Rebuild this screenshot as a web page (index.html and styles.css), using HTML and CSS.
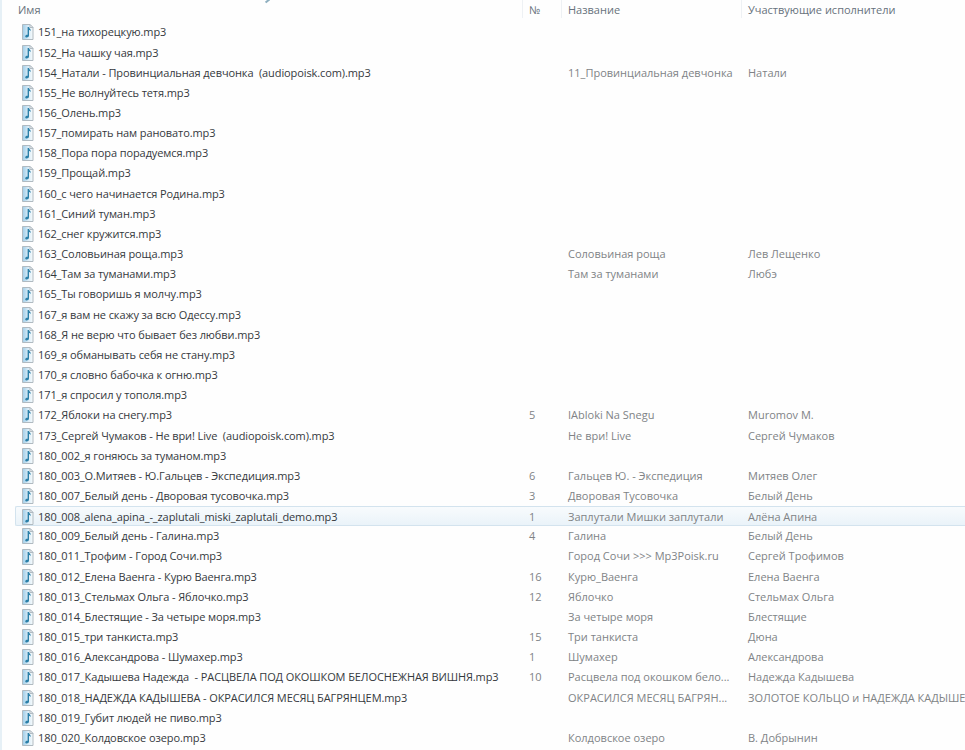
FILE: index.html
```html
<!DOCTYPE html>
<html lang="ru">
<head>
<meta charset="utf-8">
<title>Музыка</title>
<link rel="stylesheet" href="styles.css">
</head>
<body>
<svg class="defs" width="0" height="0" aria-hidden="true">
<defs>
<linearGradient id="pg" x1="0" y1="0" x2="1" y2="0"><stop offset="0" stop-color="#9fcde8"/><stop offset=".5" stop-color="#d6eaf6"/><stop offset="1" stop-color="#f7fbfd"/></linearGradient>
<symbol id="mp3" viewBox="0 0 14 16">
<path d="M1.5 .5H9L12 3.5V15.5H1.5Z" fill="url(#pg)" stroke="#b0bac1"/>
<path d="M9 .5V3.5H12Z" fill="#f6f9fb" stroke="#b0bac1"/>
<path d="M6.6 3H8C8.2 4.6 9.8 5 10 7 9.4 6.4 8.8 6.1 8 6V11.6C8 12.8 6.9 13.6 5.8 13.6 4.8 13.6 4.2 13 4.2 12.3 4.2 11.2 5.4 10.5 6.6 10.7Z" fill="#2a7fa8"/>
</symbol>
</defs>
</svg>
<span class="tick"></span>
<main class="list">
<header class="row head">
<div class="cell name">Имя</div>
<div class="cell num">№</div>
<div class="cell title">Название</div>
<div class="cell artist">Участвующие исполнители</div>
</header>
<div class="row"><div class="cell name"><svg class="ico"><use href="#mp3"/></svg><span>151_на тихорецкую.mp3</span></div></div>
<div class="row"><div class="cell name"><svg class="ico"><use href="#mp3"/></svg><span>152_На чашку чая.mp3</span></div></div>
<div class="row"><div class="cell name"><svg class="ico"><use href="#mp3"/></svg><span>154_Натали - Провинциальная девчонка  (audiopoisk.com).mp3</span></div><div class="cell num"></div><div class="cell title">11_Провинциальная девчонка</div><div class="cell artist">Натали</div></div>
<div class="row"><div class="cell name"><svg class="ico"><use href="#mp3"/></svg><span>155_Не волнуйтесь тетя.mp3</span></div></div>
<div class="row"><div class="cell name"><svg class="ico"><use href="#mp3"/></svg><span>156_Олень.mp3</span></div></div>
<div class="row"><div class="cell name"><svg class="ico"><use href="#mp3"/></svg><span>157_помирать нам рановато.mp3</span></div></div>
<div class="row"><div class="cell name"><svg class="ico"><use href="#mp3"/></svg><span>158_Пора пора порадуемся.mp3</span></div></div>
<div class="row"><div class="cell name"><svg class="ico"><use href="#mp3"/></svg><span>159_Прощай.mp3</span></div></div>
<div class="row"><div class="cell name"><svg class="ico"><use href="#mp3"/></svg><span>160_с чего начинается Родина.mp3</span></div></div>
<div class="row"><div class="cell name"><svg class="ico"><use href="#mp3"/></svg><span>161_Синий туман.mp3</span></div></div>
<div class="row"><div class="cell name"><svg class="ico"><use href="#mp3"/></svg><span>162_снег кружится.mp3</span></div></div>
<div class="row"><div class="cell name"><svg class="ico"><use href="#mp3"/></svg><span>163_Соловьиная роща.mp3</span></div><div class="cell num"></div><div class="cell title">Соловьиная роща</div><div class="cell artist">Лев Лещенко</div></div>
<div class="row"><div class="cell name"><svg class="ico"><use href="#mp3"/></svg><span>164_Там за туманами.mp3</span></div><div class="cell num"></div><div class="cell title">Там за туманами</div><div class="cell artist">Любэ</div></div>
<div class="row"><div class="cell name"><svg class="ico"><use href="#mp3"/></svg><span>165_Ты говоришь я молчу.mp3</span></div></div>
<div class="row"><div class="cell name"><svg class="ico"><use href="#mp3"/></svg><span>167_я вам не скажу за всю Одессу.mp3</span></div></div>
<div class="row"><div class="cell name"><svg class="ico"><use href="#mp3"/></svg><span>168_Я не верю что бывает без любви.mp3</span></div></div>
<div class="row"><div class="cell name"><svg class="ico"><use href="#mp3"/></svg><span>169_я обманывать себя не стану.mp3</span></div></div>
<div class="row"><div class="cell name"><svg class="ico"><use href="#mp3"/></svg><span>170_я словно бабочка к огню.mp3</span></div></div>
<div class="row"><div class="cell name"><svg class="ico"><use href="#mp3"/></svg><span>171_я спросил у тополя.mp3</span></div></div>
<div class="row"><div class="cell name"><svg class="ico"><use href="#mp3"/></svg><span>172_Яблоки на снегу.mp3</span></div><div class="cell num">5</div><div class="cell title">IAbloki Na Snegu</div><div class="cell artist">Muromov M.</div></div>
<div class="row"><div class="cell name"><svg class="ico"><use href="#mp3"/></svg><span>173_Сергей Чумаков - Не ври! Live  (audiopoisk.com).mp3</span></div><div class="cell num"></div><div class="cell title">Не ври! Live</div><div class="cell artist">Сергей Чумаков</div></div>
<div class="row"><div class="cell name"><svg class="ico"><use href="#mp3"/></svg><span>180_002_я гоняюсь за туманом.mp3</span></div></div>
<div class="row"><div class="cell name"><svg class="ico"><use href="#mp3"/></svg><span>180_003_О.Митяев - Ю.Гальцев - Экспедиция.mp3</span></div><div class="cell num">6</div><div class="cell title">Гальцев Ю. - Экспедиция</div><div class="cell artist">Митяев Олег</div></div>
<div class="row"><div class="cell name"><svg class="ico"><use href="#mp3"/></svg><span>180_007_Белый день - Дворовая тусовочка.mp3</span></div><div class="cell num">3</div><div class="cell title">Дворовая Тусовочка</div><div class="cell artist">Белый День</div></div>
<div class="row hover"><div class="cell name"><svg class="ico"><use href="#mp3"/></svg><span>180_008_alena_apina_-_zaplutali_miski_zaplutali_demo.mp3</span></div><div class="cell num">1</div><div class="cell title">Заплутали Мишки заплутали</div><div class="cell artist">Алёна Апина</div></div>
<div class="row"><div class="cell name"><svg class="ico"><use href="#mp3"/></svg><span>180_009_Белый день - Галина.mp3</span></div><div class="cell num">4</div><div class="cell title">Галина</div><div class="cell artist">Белый День</div></div>
<div class="row"><div class="cell name"><svg class="ico"><use href="#mp3"/></svg><span>180_011_Трофим - Город Сочи.mp3</span></div><div class="cell num"></div><div class="cell title">Город Сочи &gt;&gt;&gt; Mp3Poisk.ru</div><div class="cell artist">Сергей Трофимов</div></div>
<div class="row"><div class="cell name"><svg class="ico"><use href="#mp3"/></svg><span>180_012_Елена Ваенга - Курю Ваенга.mp3</span></div><div class="cell num">16</div><div class="cell title">Курю_Ваенга</div><div class="cell artist">Елена Ваенга</div></div>
<div class="row"><div class="cell name"><svg class="ico"><use href="#mp3"/></svg><span>180_013_Стельмах Ольга - Яблочко.mp3</span></div><div class="cell num">12</div><div class="cell title">Яблочко</div><div class="cell artist">Стельмах Ольга</div></div>
<div class="row"><div class="cell name"><svg class="ico"><use href="#mp3"/></svg><span>180_014_Блестящие - За четыре моря.mp3</span></div><div class="cell num"></div><div class="cell title">За четыре моря</div><div class="cell artist">Блестящие</div></div>
<div class="row"><div class="cell name"><svg class="ico"><use href="#mp3"/></svg><span>180_015_три танкиста.mp3</span></div><div class="cell num">15</div><div class="cell title">Три танкиста</div><div class="cell artist">Дюна</div></div>
<div class="row"><div class="cell name"><svg class="ico"><use href="#mp3"/></svg><span>180_016_Александрова - Шумахер.mp3</span></div><div class="cell num">1</div><div class="cell title">Шумахер</div><div class="cell artist">Александрова</div></div>
<div class="row"><div class="cell name"><svg class="ico"><use href="#mp3"/></svg><span>180_017_Кадышева Надежда  - РАСЦВЕЛА ПОД ОКОШКОМ БЕЛОСНЕЖНАЯ ВИШНЯ.mp3</span></div><div class="cell num">10</div><div class="cell title">Расцвела под окошком бело...</div><div class="cell artist">Надежда Кадышева</div></div>
<div class="row"><div class="cell name"><svg class="ico"><use href="#mp3"/></svg><span>180_018_НАДЕЖДА КАДЫШЕВА - ОКРАСИЛСЯ МЕСЯЦ БАГРЯНЦЕМ.mp3</span></div><div class="cell num"></div><div class="cell title">ОКРАСИЛСЯ МЕСЯЦ БАГРЯН...</div><div class="cell artist">ЗОЛОТОЕ КОЛЬЦО и НАДЕЖДА КАДЫШЕВА</div></div>
<div class="row"><div class="cell name"><svg class="ico"><use href="#mp3"/></svg><span>180_019_Губит людей не пиво.mp3</span></div></div>
<div class="row"><div class="cell name"><svg class="ico"><use href="#mp3"/></svg><span>180_020_Колдовское озеро.mp3</span></div><div class="cell num"></div><div class="cell title">Колдовское озеро</div><div class="cell artist">В. Добрынин</div></div>
</main>
</body>
</html>
```
FILE: styles.css
```css
html, body {
  margin: 0;
  height: 100%;
  overflow: hidden;
  background: #fefefe;
}
body {
  font-family: "Open Sans", "Noto Sans", sans-serif;
  font-size: 11px;
  color: #3a3f44;
  border-left: 2px solid #e6f0f6;
  box-sizing: border-box;
}
.defs {
  position: absolute;
}
.tick {
  position: absolute;
  left: 265px;
  top: 0;
  width: 5px;
  height: 2px;
  background: #8fb0c0;
  transform: rotate(-40deg);
}
.list {
  width: 963px;
  overflow: hidden;
}
.row {
  display: grid;
  grid-template-columns: 521px 39px 180px 1fr;
  height: 20.17px;
  line-height: 20.17px;
  align-items: center;
  box-sizing: border-box;
  white-space: pre;
}
.head {
  height: 22.4px;
  line-height: 20px;
  align-items: start;
  padding-bottom: 2px;
}
.cell {
  min-width: 0;
  height: 100%;
  overflow: hidden;
  padding-left: 6px;
  box-sizing: border-box;
  color: #808386;
}
.cell.name {
  display: flex;
  align-items: center;
  gap: 3px;
  padding-left: 19px;
  color: #35393d;
  letter-spacing: -0.1px;
}
.cell.artist {
  overflow: visible;
}
.head .cell {
  color: #68727c;
  border-right: 1px solid #eef1f4;
  height: 18px;
  letter-spacing: 0;
}
.head .cell.name {
  display: block;
  padding-left: 16px;
}
.head .cell.artist {
  border-right: 0;
}
.ico {
  flex: none;
  width: 14px;
  height: 16px;
}
.hover {
  margin-left: 13px;
  grid-template-columns: 507px 39px 180px 1fr;
  background: linear-gradient(#f8fbfd, #eaf3f9);
  border: 1px solid #d3e3ee;
  border-right: 0;
  border-radius: 2px 0 0 2px;
}
.hover .cell.name {
  padding-left: 5px;
}
```
